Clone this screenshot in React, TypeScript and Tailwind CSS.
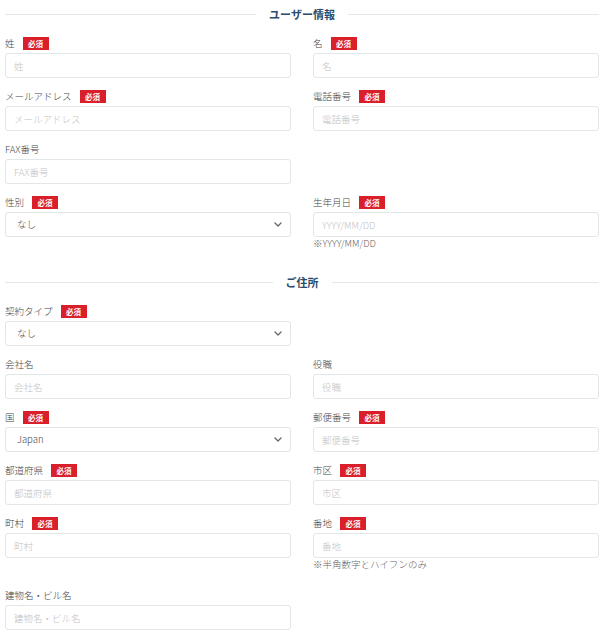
import React from 'react'

const font = { fontFamily: '"Noto Sans CJK JP", "Noto Sans", sans-serif' }

const Badge = () => (
  <span className="ml-[8px] inline-flex items-center justify-center h-[13px] w-[26px] bg-[#d9202a] text-white text-[7.5px] font-bold leading-none">
    必須
  </span>
)

interface FieldProps {
  label: string
  required?: boolean
  placeholder?: string
  select?: string
  hint?: string
}

const Chevron = () => (
  <svg className="absolute right-[9px] top-[10px] pointer-events-none" width="8" height="5" viewBox="0 0 8 5" fill="none">
    <path d="M1 1l3 3 3-3" stroke="#666" strokeWidth="1.3" strokeLinecap="round" strokeLinejoin="round" />
  </svg>
)

const Field: React.FC<FieldProps> = ({ label, required, placeholder, select, hint }) => (
  <div className="flex flex-col mb-[12px]">
    <div className="flex items-center h-[13px] text-[9.5px] font-light text-[#444] leading-none">
      <span>{label}</span>
      {required && <Badge />}
    </div>
    {select ? (
      <div className="relative mt-[3px] h-[25px]">
        <select
          className="block appearance-none w-full h-[25px] border border-[#e1e6e6] rounded-[3px] bg-white pl-[11px] text-[9.5px] font-light text-[#444] outline-none"
          defaultValue={select}
        >
          <option>{select}</option>
        </select>
        <Chevron />
      </div>
    ) : (
      <input
        className="block mt-[3px] w-full h-[25px] border border-[#e1e6e6] rounded-[3px] bg-white px-[8px] text-[9.5px] font-light text-[#555] outline-none placeholder:text-[#c2c2c2]"
        placeholder={placeholder ?? label}
      />
    )}
    {hint && <div className="text-[9.5px] leading-[12px] font-light text-[#666] mb-[7px]">{hint}</div>}
  </div>
)

const Heading = ({ title }: { title: string }) => (
  <div className="flex items-center py-[6px] h-[28px] mb-[9px]">
    <div className="flex-1 h-px bg-[#e4e7e7]" />
    <div className="mx-[13px] text-[11px] font-bold text-[#2b4b6c] leading-none">{title}</div>
    <div className="flex-1 h-px bg-[#e4e7e7]" />
  </div>
)

export default function App() {
  return (
    <div className="bg-white w-[605px] min-h-[640px] pl-[5px] pr-[6px]" style={font}>
      <Heading title="ユーザー情報" />
      <div className="grid grid-cols-2 gap-x-[22px]">
        <Field label="姓" required />
        <Field label="名" required />
        <Field label="メールアドレス" required />
        <Field label="電話番号" required />
        <Field label="FAX番号" />
        <div />
        <Field label="性別" required select="なし" />
        <Field label="生年月日" required placeholder="YYYY/MM/DD" hint="※YYYY/MM/DD" />
      </div>
      <Heading title="ご住所" />
      <div className="grid grid-cols-2 gap-x-[22px]">
        <Field label="契約タイプ" required select="なし" />
        <div />
        <Field label="会社名" />
        <Field label="役職" />
        <Field label="国" required select="Japan" />
        <Field label="郵便番号" required />
        <Field label="都道府県" required />
        <Field label="市区" required />
        <Field label="町村" required />
        <Field label="番地" required hint="※半角数字とハイフンのみ" />
        <Field label="建物名・ビル名" />
        <div />
      </div>
    </div>
  )
}
